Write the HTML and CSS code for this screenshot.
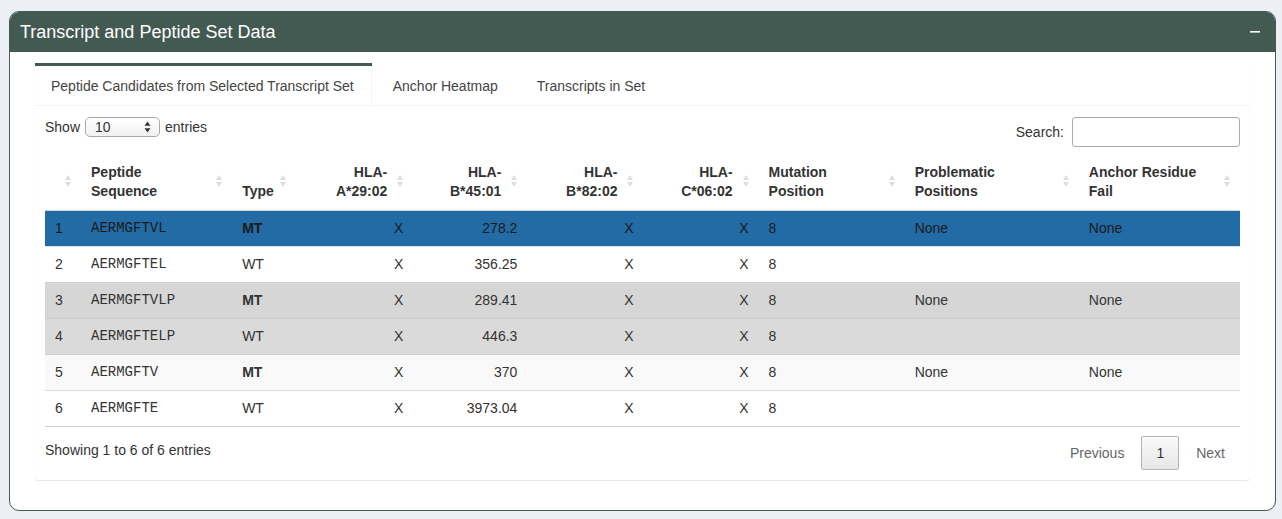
FILE: index.html
```html
<!DOCTYPE html>
<html lang="en">
<head>
<meta charset="utf-8">
<title>Transcript and Peptide Set Data</title>
<link rel="stylesheet" href="styles.css">
</head>
<body>
<div class="page">
  <div class="box">
    <div class="box-header">
      <h3 class="box-title">Transcript and Peptide Set Data</h3>
      <button class="btn-tool" type="button" aria-label="Collapse">
        <svg width="10" height="10" viewBox="0 0 10 10"><rect x="0" y="4" width="10" height="1.6" fill="#fff"/></svg>
      </button>
    </div>
    <div class="box-body">
      <div class="tabs">
        <ul class="nav-tabs">
          <li class="active"><a href="#">Peptide Candidates from Selected Transcript Set</a></li>
          <li><a href="#">Anchor Heatmap</a></li>
          <li><a href="#">Transcripts in Set</a></li>
        </ul>
        <div class="tab-content">
          <div class="dt-top">
            <label class="dt-length">Show
              <span class="select-wrap">
                <select class="select"><option>10</option><option>25</option><option>50</option><option>100</option></select>
                <svg class="select-arrow" width="7" height="12" viewBox="0 0 7 12"><polygon points="3.5,0.5 6.5,4.8 0.5,4.8" fill="#333"/><polygon points="0.5,7.2 6.5,7.2 3.5,11.5" fill="#333"/></svg>
              </span>
            entries</label>
            <label class="dt-filter">Search:<input class="search" type="search"></label>
          </div>
          <table class="dt">
            <colgroup>
              <col class="c-idx"><col class="c-seq"><col class="c-type"><col class="c-hla"><col class="c-hla2"><col class="c-hla3"><col class="c-hla4"><col class="c-mut"><col class="c-prob"><col class="c-anc">
            </colgroup>
            <thead>
              <tr>
                <th class="sort"></th>
                <th class="sort">Peptide<br>Sequence</th>
                <th class="sort">Type</th>
                <th class="sort r">HLA-<br>A*29:02</th>
                <th class="sort r">HLA-<br>B*45:01</th>
                <th class="sort r">HLA-<br>B*82:02</th>
                <th class="sort r">HLA-<br>C*06:02</th>
                <th class="sort">Mutation<br>Position</th>
                <th class="sort">Problematic<br>Positions</th>
                <th class="sort">Anchor Residue<br>Fail</th>
              </tr>
            </thead>
            <tbody>
              <tr class="row-selected">
                <td>1</td><td class="mono">AERMGFTVL</td><td><b>MT</b></td><td class="r">X</td><td class="r">278.2</td><td class="r">X</td><td class="r">X</td><td>8</td><td>None</td><td>None</td>
              </tr>
              <tr class="row-white">
                <td>2</td><td class="mono">AERMGFTEL</td><td>WT</td><td class="r">X</td><td class="r">356.25</td><td class="r">X</td><td class="r">X</td><td>8</td><td></td><td></td>
              </tr>
              <tr class="row-gray">
                <td>3</td><td class="mono">AERMGFTVLP</td><td><b>MT</b></td><td class="r">X</td><td class="r">289.41</td><td class="r">X</td><td class="r">X</td><td>8</td><td>None</td><td>None</td>
              </tr>
              <tr class="row-gray2">
                <td>4</td><td class="mono">AERMGFTELP</td><td>WT</td><td class="r">X</td><td class="r">446.3</td><td class="r">X</td><td class="r">X</td><td>8</td><td></td><td></td>
              </tr>
              <tr class="row-stripe">
                <td>5</td><td class="mono">AERMGFTV</td><td><b>MT</b></td><td class="r">X</td><td class="r">370</td><td class="r">X</td><td class="r">X</td><td>8</td><td>None</td><td>None</td>
              </tr>
              <tr class="row-white">
                <td>6</td><td class="mono">AERMGFTE</td><td>WT</td><td class="r">X</td><td class="r">3973.04</td><td class="r">X</td><td class="r">X</td><td>8</td><td></td><td></td>
              </tr>
            </tbody>
          </table>
          <div class="dt-bottom">
            <div class="dt-info">Showing 1 to 6 of 6 entries</div>
            <div class="dt-paginate">
              <a class="pg disabled">Previous</a><a class="pg current">1</a><a class="pg disabled">Next</a>
            </div>
          </div>
        </div>
      </div>
    </div>
  </div>
</div>
</body>
</html>
```
FILE: styles.css
```css
html, body {
  margin: 0;
  padding: 0;
}

body {
  background: #ecf0f5;
  font-family: "Liberation Sans", Arial, sans-serif;
  font-size: 14px;
  line-height: 20px;
  color: #333;
}

.page {
  padding: 11px 6px 7px 9px;
}

.box {
  background: #fff;
  border: 1px solid #435a52;
  border-radius: 10px;
}

.box-header {
  display: flex;
  align-items: center;
  justify-content: space-between;
  height: 40px;
  box-sizing: border-box;
  padding: 10px 10px 10px 10px;
  background: #435a52;
  color: #fff;
  border-radius: 9px 9px 0 0;
}

.box-title {
  margin: 0;
  font-size: 18px;
  font-weight: normal;
  line-height: 20px;
}

.btn-tool {
  display: flex;
  align-items: center;
  justify-content: center;
  padding: 0 5px 0 0;
  margin: 0;
  border: 0;
  background: transparent;
  height: 20px;
  cursor: pointer;
}

.box-body {
  padding: 11px 25px 10px 25px;
}

.tabs {
  background: #fff;
  border-radius: 3px;
  box-shadow: 0 1px 1px rgba(0, 0, 0, 0.1);
  margin-bottom: 20px;
}

.nav-tabs {
  display: flex;
  list-style: none;
  margin: 0;
  padding: 0;
  border-bottom: 1px solid #f4f4f4;
}

.nav-tabs li {
  border-top: 3px solid transparent;
  margin-right: 7px;
}

.nav-tabs li.active {
  border-top-color: #435a52;
  margin-right: 0;
}

.nav-tabs li.active + li {
  margin-left: 5px;
}

.nav-tabs a {
  display: block;
  padding: 10px 15px 9px;
  line-height: 20px;
  color: #444;
  text-decoration: none;
  border-left: 1px solid transparent;
  border-right: 1px solid transparent;
}

.nav-tabs li.active a {
  padding-right: 17px;
  border-right-color: #f4f4f4;
}

.tab-content {
  padding: 10px;
}

.dt-top {
  display: flex;
  justify-content: space-between;
  align-items: flex-start;
  padding-top: 1px;
  height: 31px;
}

.dt-length {
  display: flex;
  align-items: center;
  gap: 5px;
  height: 20px;
  line-height: 20px;
}

.select-wrap {
  position: relative;
  display: inline-block;
  height: 20px;
}

.select {
  appearance: none;
  -webkit-appearance: none;
  width: 75px;
  height: 20px;
  box-sizing: border-box;
  margin: 0;
  padding: 0 0 0 9px;
  border: 1px solid #a9a9a9;
  border-radius: 5px;
  background: linear-gradient(#ffffff, #f1f1f1);
  font-family: "Liberation Sans", Arial, sans-serif;
  font-size: 14px;
  line-height: 18px;
  color: #333;
}

.select-arrow {
  position: absolute;
  right: 9px;
  top: 4px;
  pointer-events: none;
}

.dt-filter {
  display: flex;
  align-items: center;
  gap: 8px;
  height: 30px;
}

.search {
  width: 168px;
  height: 30px;
  box-sizing: border-box;
  margin: 0;
  padding: 4px;
  border: 1px solid #aaa;
  border-radius: 3px;
  background: #fff;
  font-family: "Liberation Sans", Arial, sans-serif;
  font-size: 14px;
}

.dt {
  width: 100%;
  table-layout: fixed;
  border-collapse: separate;
  border-spacing: 0;
  margin-top: 4px;
  border-bottom: 1px solid #cfcfcf;
}

.c-idx { width: 36px; }
.c-seq { width: 151px; }
.c-type { width: 64px; }
.c-hla { width: 117px; }
.c-hla2 { width: 114px; }
.c-hla3 { width: 116px; }
.c-hla4 { width: 115px; }
.c-mut { width: 146px; }
.c-prob { width: 174px; }
.c-anc { width: 161px; }

.dt th {
  position: relative;
  padding: 11px 26px 9px 10px;
  line-height: 19px;
  font-weight: bold;
  text-align: left;
  vertical-align: bottom;
  border-bottom: 1px solid #d4d4d4;
  color: #333;
}

.dt th.r,
.dt td.r {
  text-align: right;
}

.dt th.sort::before,
.dt th.sort::after {
  content: "";
  position: absolute;
  right: 10px;
  width: 0;
  height: 0;
  border-left: 3px solid transparent;
  border-right: 3px solid transparent;
}

.dt th.sort::before {
  bottom: calc(50% + 1px);
  border-bottom: 5px solid #dedede;
}

.dt th.sort::after {
  top: calc(50% + 1px);
  border-top: 5px solid #dedede;
}

.dt td {
  padding: 8px 10px;
  line-height: 19px;
  border-top: 1px solid #ddd;
  white-space: nowrap;
  overflow: hidden;
}

.dt tbody tr:first-child td {
  border-top: 0;
}

.dt td.mono {
  font-family: "Liberation Mono", "Courier New", monospace;
  font-size: 14px;
}

.row-selected td {
  background: #236ba5;
  color: #1a1a1a;
}

.row-white td {
  background: #fff;
}

.row-gray td {
  background: #d6d6d6;
  border-top-color: #cfcfcf;
}

.row-gray2 td {
  background: #dadada;
  border-top-color: #cbcbcb;
}

.row-stripe td {
  background: #f9f9f9;
  border-top-color: #d0d0d0;
}

.dt-bottom {
  display: flex;
  justify-content: space-between;
  align-items: flex-start;
}

.dt-info {
  padding-top: 13px;
  line-height: 20px;
}

.dt-paginate {
  display: flex;
  padding-top: 9px;
}

.pg {
  display: inline-block;
  padding: 6px 14px;
  margin-left: 2px;
  line-height: 20px;
  border: 1px solid transparent;
  border-radius: 2px;
  color: #333;
  text-decoration: none;
  cursor: default;
}

.pg.disabled {
  color: #666;
}

.pg.current {
  border-color: #b5b5b5;
  background: linear-gradient(#fafafa, #e6e6e6);
  color: #333;
}
```
